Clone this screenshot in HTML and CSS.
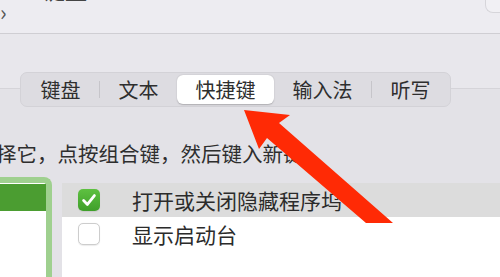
FILE: index.html
```html
<!DOCTYPE html>
<html lang="zh-CN">
<head>
<meta charset="utf-8">
<title>键盘</title>
<link rel="stylesheet" href="styles.css">
</head>
<body>
<div class="titlebar">
  <span class="nav">‹ ›</span>
  <span class="title">键盘</span>
  <span class="search"></span>
</div>
<div class="main">
  <div class="tabhead">
    <div class="seg-control">
      <span class="seg">键盘</span>
      <span class="sep"></span>
      <span class="seg">文本</span>
      <span class="seg active">快捷键</span>
      <span class="seg">输入法</span>
      <span class="sep"></span>
      <span class="seg">听写</span>
    </div>
  </div>
  <div class="tabcontent">
    <div class="info">择它，点按组合键，然后键入新键。</div>
    <div class="lists">
      <div class="leftlist">
        <div class="leftrow selected"></div>
      </div>
      <div class="rightlist">
        <div class="row hl">
          <span class="cb checked"><svg viewBox="0 0 22 22" width="22" height="22"><path d="M5.6 11.6 L9.4 15.4 L16.4 6.6" fill="none" stroke="#fff" stroke-width="2.8" stroke-linecap="round" stroke-linejoin="round"/></svg></span>
          <span class="label">打开或关闭隐藏程序坞</span>
        </div>
        <div class="row">
          <span class="cb"></span>
          <span class="label">显示启动台</span>
        </div>
      </div>
    </div>
  </div>
</div>
<svg class="arrow" viewBox="0 0 500 277" width="500" height="277">
  <polygon points="244,110 290,115 279,123 393,223 366,223 267,138 259,149" fill="#ff2a05"/>
</svg>
</body>
</html>
```

FILE: styles.css
```css
html, body {
  margin: 0;
  padding: 0;
}
body {
  width: 500px;
  height: 277px;
  overflow: hidden;
  position: relative;
  font-family: "Noto Sans CJK SC", "Noto Sans", sans-serif;
  background: #e3e2e7;
}
.titlebar {
  height: 33px;
  background: #edecf1;
  border-bottom: 1px solid #cfced3;
  display: flex;
  align-items: flex-start;
  overflow: hidden;
}
.nav {
  font-size: 22px;
  line-height: 22px;
  margin-top: -22px;
  color: #555;
  width: 16px;
}
.title {
  font-size: 22px;
  line-height: 22px;
  margin-top: -22px;
  margin-left: 27px;
  color: #444;
  font-weight: 700;
}
.search {
  margin-left: auto;
  width: 14px;
  height: 12px;
  border: 1px solid #d6d5da;
  border-top: none;
  border-right: none;
  border-radius: 0 0 0 8px;
  background: #f1f0f4;
}
.main {
  background: #e8e7ec;
  padding-top: 38px;
}
.tabhead {
  display: flex;
  background: linear-gradient(to bottom, #e8e7ec 0, #e8e7ec 16px, #d5d4d9 16px, #d5d4d9 17px, #e3e2e7 17px);
}
.seg-control {
  margin-left: 20px;
  display: flex;
  align-items: center;
  height: 31px;
  padding: 1px;
  border: 1px solid #d3d2d7;
  border-radius: 7px;
  background: #dddce1;
}
.seg {
  padding: 0 18.5px;
  font-size: 20px;
  line-height: 29px;
  height: 29px;
  color: #2e2e2e;
  white-space: nowrap;
}
.seg.active {
  background: #ffffff;
  border-radius: 6px;
  box-shadow: 0 0.5px 1.5px rgba(0, 0, 0, 0.22);
}
.sep {
  width: 1px;
  height: 17px;
  background: #c6c5ca;
}
.tabcontent {
  background: #e3e2e7;
  height: 172px;
  overflow: hidden;
}
.info {
  padding-top: 34px;
  margin-left: -4px;
  font-size: 20.5px;
  line-height: 24px;
  color: #2e2e2e;
  white-space: nowrap;
}
.lists {
  display: flex;
  margin-top: 12px;
  gap: 10px;
}
.leftlist {
  margin-left: -26px;
  width: 66px;
  height: 95px;
  padding-top: 1px;
  background: #ffffff;
  border: 6px solid #9fd08f;
  border-bottom: none;
  border-radius: 0 8px 0 0;
}
.leftrow {
  height: 27px;
}
.leftrow.selected {
  background: #4b9d31;
}
.rightlist {
  flex: 1;
  margin-top: 6px;
  background: #ffffff;
  height: 96px;
}
.row {
  height: 33px;
  display: flex;
  align-items: center;
  padding-left: 16px;
  gap: 32px;
}
.row.hl {
  height: 34px;
  background: #dcdcdc;
}
.cb {
  width: 22px;
  height: 22px;
  box-sizing: border-box;
  border-radius: 5px;
  background: #ffffff;
  border: 1px solid #cdcdcd;
  box-shadow: 0 0.5px 1px rgba(0, 0, 0, 0.08);
  flex: none;
  display: block;
}
.cb.checked {
  border: none;
  background: linear-gradient(to bottom, #5ec141, #3f9f2a);
}
.cb svg {
  display: block;
}
.label {
  font-size: 21px;
  line-height: 26px;
  color: #2b2b2b;
  white-space: nowrap;
}
.arrow {
  position: absolute;
  left: 0;
  top: 0;
  pointer-events: none;
}
```
